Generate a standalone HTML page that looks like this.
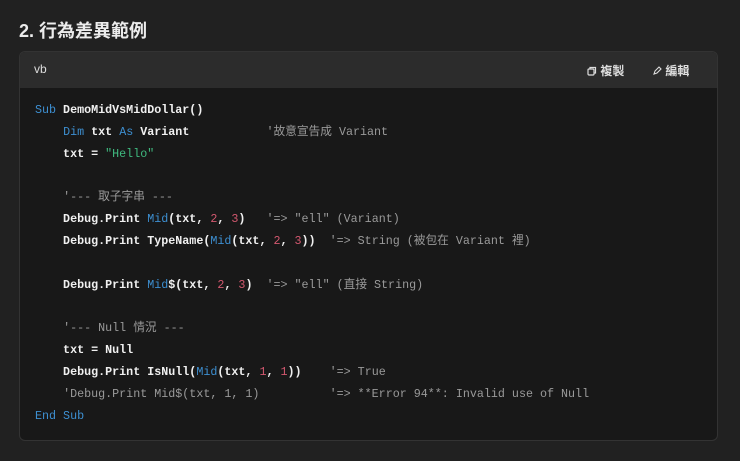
<!DOCTYPE html>
<html><head><meta charset="utf-8"><style>
body{margin:0;background:#212121;width:740px;height:461px;overflow:hidden;font-family:"Liberation Sans","Noto Sans CJK TC",sans-serif;}
h2{position:absolute;left:19px;top:17px;margin:0;font-size:18px;font-weight:bold;color:#ececec;}
.box{position:absolute;left:19px;top:51px;width:699px;height:390px;border:1px solid #333;border-radius:6px;background:#181818;overflow:hidden;box-sizing:border-box;}
.hd{height:36px;background:#2c2c2c;position:relative;color:#ddd;font-size:12px;}
.hd .l{position:absolute;left:14px;top:10px;}
.hd .c{position:absolute;left:567px;top:10px;font-weight:bold;}
.hd .e{position:absolute;left:632px;top:10px;font-weight:bold;}
pre{margin:0;position:absolute;left:15px;top:48px;font-family:"Liberation Mono","Noto Sans CJK TC",monospace;font-size:11.7px;line-height:21.85px;color:#f0f0f0;font-weight:bold;}
.k{color:#3d8fd1;font-weight:normal}.s{color:#3fb97f;font-weight:normal}.n{color:#d3586f;font-weight:normal}.c2{color:#9a9a9a;font-weight:normal}
</style></head><body>
<h2>2. 行為差異範例</h2>
<div class="box"><div class="hd"><span class="l">vb</span>
<span class="c"><svg width="10" height="10" viewBox="0 0 10 10" style="vertical-align:-1px"><rect x="1" y="3" width="6" height="6" rx="1" fill="none" stroke="#ddd" stroke-width="1.2"/><path d="M3 3V1.5h5.5V7H7" fill="none" stroke="#ddd" stroke-width="1.2"/></svg> 複製</span>
<span class="e"><svg width="10" height="10" viewBox="0 0 10 10" style="vertical-align:-1px"><path d="M2 8l1-3 4-4 2 2-4 4z" fill="none" stroke="#ddd" stroke-width="1.1"/></svg> 編輯</span></div>
<pre><span class="k">Sub</span> DemoMidVsMidDollar()
    <span class="k">Dim</span> txt <span class="k">As</span> Variant           <span class="c2">'故意宣告成 Variant</span>
    txt = <span class="s">"Hello"</span>

    <span class="c2">'--- 取子字串 ---</span>
    Debug.Print <span class="k">Mid</span>(txt, <span class="n">2</span>, <span class="n">3</span>)   <span class="c2">'=&gt; "ell" (Variant)</span>
    Debug.Print TypeName(<span class="k">Mid</span>(txt, <span class="n">2</span>, <span class="n">3</span>))  <span class="c2">'=&gt; String (被包在 Variant 裡)</span>

    Debug.Print <span class="k">Mid</span>$(txt, <span class="n">2</span>, <span class="n">3</span>)  <span class="c2">'=&gt; "ell" (直接 String)</span>

    <span class="c2">'--- Null 情況 ---</span>
    txt = Null
    Debug.Print IsNull(<span class="k">Mid</span>(txt, <span class="n">1</span>, <span class="n">1</span>))    <span class="c2">'=&gt; True</span>
    <span class="c2">'Debug.Print Mid$(txt, 1, 1)          '=&gt; **Error 94**: Invalid use of Null</span>
<span class="k">End Sub</span></pre></div>
</body></html>
